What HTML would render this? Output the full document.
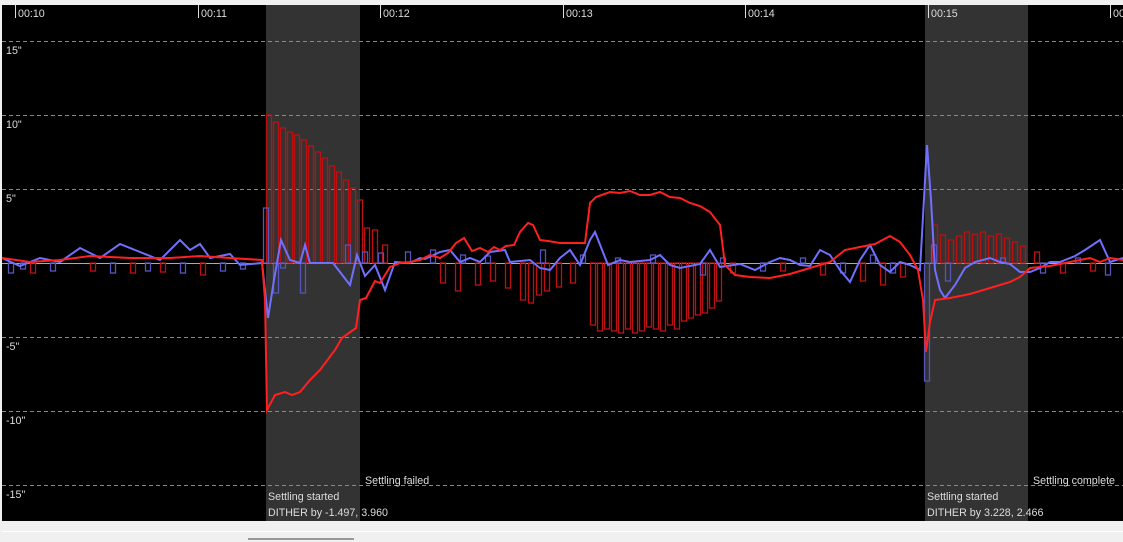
<!DOCTYPE html>
<html><head><style>
body{margin:0;width:1123px;height:542px;background:#f0f0f0;overflow:hidden;font-family:"Liberation Sans",sans-serif}
svg{position:absolute;left:0;top:0}
text{font-family:"Liberation Sans",sans-serif;font-size:10.7px;fill:#ddd}
</style></head><body>
<svg width="1123" height="542">
<rect x="2" y="5" width="1121" height="516" fill="#000"/>
<rect x="266" y="5" width="94" height="516" fill="#333"/>
<rect x="925" y="5" width="103" height="516" fill="#333"/>
<g stroke="#888" stroke-dasharray="4,3" stroke-width="1">
<line x1="2" y1="41.5" x2="1123" y2="41.5"/><line x1="2" y1="115.5" x2="1123" y2="115.5"/>
<line x1="2" y1="189.5" x2="1123" y2="189.5"/><line x1="2" y1="337.5" x2="1123" y2="337.5"/>
<line x1="2" y1="411.5" x2="1123" y2="411.5"/><line x1="2" y1="485.5" x2="1123" y2="485.5"/>
</g>
<line x1="2" y1="263.5" x2="1123" y2="263.5" stroke="#aaa"/>
<g stroke="#ddd"><line x1="15.5" y1="5" x2="15.5" y2="18"/><line x1="198.5" y1="5" x2="198.5" y2="18"/><line x1="380.5" y1="5" x2="380.5" y2="18"/><line x1="563.5" y1="5" x2="563.5" y2="18"/><line x1="745.5" y1="5" x2="745.5" y2="18"/><line x1="928.5" y1="5" x2="928.5" y2="18"/><line x1="1110.5" y1="5" x2="1110.5" y2="18"/></g>
<text x="18" y="17">00:10</text><text x="201" y="17">00:11</text><text x="383" y="17">00:12</text><text x="566" y="17">00:13</text><text x="748" y="17">00:14</text><text x="931" y="17">00:15</text><text x="1113" y="17">00:16</text>
<text x="6" y="54">15"</text><text x="6" y="128">10"</text><text x="6" y="202">5"</text><text x="6" y="350">-5"</text><text x="6" y="424">-10"</text><text x="6" y="498">-15"</text>
<g fill="none" stroke="#b11" stroke-width="1.3">
<rect x="266.5" y="115" width="5" height="148"/><rect x="273.5" y="122" width="5" height="141"/><rect x="280.5" y="128" width="5" height="135"/><rect x="287.5" y="132" width="5" height="131"/><rect x="294.5" y="135" width="5" height="128"/><rect x="301.5" y="140" width="5" height="123"/><rect x="308.5" y="146" width="5" height="117"/><rect x="315.5" y="152" width="5" height="111"/><rect x="322.5" y="158" width="5" height="105"/><rect x="329.5" y="166" width="5" height="97"/><rect x="336.5" y="172" width="5" height="91"/><rect x="343.5" y="180" width="5" height="83"/><rect x="350.5" y="188" width="5" height="75"/><rect x="357.5" y="200" width="5" height="63"/>
<rect x="364.5" y="228" width="5" height="35"/><rect x="372.5" y="230" width="5" height="33"/><rect x="382.5" y="245" width="5" height="18"/>
<rect x="30.5" y="263" width="5" height="10"/><rect x="90.5" y="263" width="5" height="8"/><rect x="130.5" y="263" width="5" height="10"/><rect x="160.5" y="263" width="5" height="9"/><rect x="200.5" y="263" width="5" height="12"/>
<rect x="440.5" y="263" width="5" height="20"/><rect x="455.5" y="263" width="5" height="28"/><rect x="475.5" y="263" width="5" height="22"/><rect x="490.5" y="263" width="5" height="18"/><rect x="505.5" y="263" width="5" height="25"/>
<rect x="520.5" y="263" width="5" height="37"/><rect x="528.5" y="263" width="5" height="40"/><rect x="536.5" y="263" width="5" height="32"/><rect x="544.5" y="263" width="5" height="28"/><rect x="556.5" y="263" width="5" height="24"/><rect x="570.5" y="263" width="5" height="20"/>
<rect x="590.5" y="263" width="5" height="62"/><rect x="597.5" y="263" width="5" height="68"/><rect x="604.5" y="263" width="5" height="66"/><rect x="611.5" y="263" width="5" height="68"/><rect x="618.5" y="263" width="5" height="70"/><rect x="625.5" y="263" width="5" height="66"/><rect x="632.5" y="263" width="5" height="70"/><rect x="639.5" y="263" width="5" height="68"/><rect x="646.5" y="263" width="5" height="64"/><rect x="653.5" y="263" width="5" height="66"/><rect x="660.5" y="263" width="5" height="68"/><rect x="667.5" y="263" width="5" height="62"/><rect x="674.5" y="263" width="5" height="66"/><rect x="681.5" y="263" width="5" height="58"/><rect x="688.5" y="263" width="5" height="55"/><rect x="695.5" y="263" width="5" height="52"/><rect x="702.5" y="263" width="5" height="50"/><rect x="709.5" y="263" width="5" height="45"/><rect x="716.5" y="263" width="5" height="38"/>
<rect x="730.5" y="263" width="5" height="10"/><rect x="780.5" y="263" width="5" height="8"/><rect x="820.5" y="263" width="5" height="12"/><rect x="860.5" y="263" width="5" height="18"/><rect x="880.5" y="263" width="5" height="22"/><rect x="900.5" y="263" width="5" height="14"/>
<rect x="932.5" y="225" width="5" height="38"/><rect x="940.5" y="235" width="5" height="28"/><rect x="948.5" y="240" width="5" height="23"/><rect x="956.5" y="236" width="5" height="27"/><rect x="964.5" y="232" width="5" height="31"/><rect x="972.5" y="234" width="5" height="29"/><rect x="980.5" y="232" width="5" height="31"/><rect x="988.5" y="236" width="5" height="27"/><rect x="996.5" y="234" width="5" height="29"/><rect x="1004.5" y="238" width="5" height="25"/><rect x="1012.5" y="242" width="5" height="21"/><rect x="1020.5" y="246" width="5" height="17"/><rect x="1034.5" y="252" width="5" height="11"/><rect x="1060.5" y="263" width="5" height="10"/><rect x="1090.5" y="263" width="5" height="8"/>
</g>
<g fill="none" stroke="#55b" stroke-width="1.3">
<rect x="263.5" y="208" width="5" height="55"/><rect x="273.5" y="263" width="5" height="30"/><rect x="280.5" y="263" width="5" height="5"/><rect x="300.5" y="263" width="5" height="30"/><rect x="345.5" y="245" width="5" height="18"/><rect x="362.5" y="252" width="5" height="11"/><rect x="378.5" y="253" width="5" height="10"/>
<rect x="8.5" y="263" width="5" height="10"/><rect x="20.5" y="263" width="5" height="6"/><rect x="50.5" y="263" width="5" height="8"/><rect x="110.5" y="263" width="5" height="10"/><rect x="145.5" y="263" width="5" height="8"/><rect x="180.5" y="263" width="5" height="10"/><rect x="220.5" y="263" width="5" height="8"/><rect x="240.5" y="263" width="5" height="6"/>
<rect x="405.5" y="252" width="5" height="11"/><rect x="430.5" y="250" width="5" height="13"/><rect x="460.5" y="255" width="5" height="8"/><rect x="485.5" y="256" width="5" height="7"/><rect x="540.5" y="250" width="5" height="13"/><rect x="580.5" y="255" width="5" height="8"/><rect x="615.5" y="258" width="5" height="5"/><rect x="650.5" y="255" width="5" height="8"/><rect x="700.5" y="263" width="5" height="12"/><rect x="720.5" y="258" width="5" height="5"/><rect x="760.5" y="263" width="5" height="8"/><rect x="800.5" y="258" width="5" height="5"/><rect x="840.5" y="263" width="5" height="10"/><rect x="870.5" y="255" width="5" height="8"/><rect x="890.5" y="263" width="5" height="10"/>
<rect x="924.5" y="263" width="5" height="118"/><rect x="931.5" y="245" width="5" height="18"/><rect x="945.5" y="263" width="5" height="18"/><rect x="1000.5" y="258" width="5" height="5"/><rect x="1040.5" y="263" width="5" height="10"/><rect x="1075.5" y="258" width="5" height="5"/><rect x="1105.5" y="263" width="5" height="12"/>
</g>
<polyline fill="none" stroke="#7070ff" stroke-width="2" points="2,258 20,266 40,258 60,262 80,248 100,258 120,244 140,252 160,260 170,250 180,240 190,250 200,244 210,258 230,254 240,265 262,263 268,318 274,280 281,240 290,260 300,263 305,245 310,263 320,263 333,263 350,285 357,255 365,276 375,265 385,290 395,262 410,263 420,258 425,259 440,252 450,250 460,262 470,258 480,262 490,252 505,250 510,262 530,260 540,268 550,270 560,258 570,250 580,265 590,240 595,232 608,265 620,260 630,262 650,260 660,255 670,265 680,268 700,264 710,250 720,267 740,264 755,270 770,262 780,258 790,260 800,265 810,266 820,250 830,255 840,270 850,282 860,260 870,245 880,265 890,272 900,262 910,265 920,270 927,145 931,200 935,270 940,290 945,298 955,285 965,268 975,262 990,258 1000,262 1010,264 1020,272 1030,272 1040,268 1050,262 1060,262 1075,256 1085,250 1100,240 1110,262 1123,258"/>
<polyline fill="none" stroke="#ff2020" stroke-width="2" points="2,258 30,262 60,260 90,256 130,258 170,258 200,256 230,258 262,260 265,300 267,410 275,395 285,392 292,395 300,392 310,380 320,370 335,350 342,338 356,328 360,300 366,298 375,281 380,283 390,267 400,263 410,262 420,260 430,255 440,258 448,253 456,243 464,238 472,251 480,248 488,252 494,247 500,250 506,246 514,245 520,232 528,223 533,225 540,240 548,241 560,243 576,243 585,243 590,203 596,197 610,192 620,193 630,191 640,195 650,195 660,192 670,197 680,198 690,203 700,206 710,212 720,225 725,265 735,275 750,277 770,278 790,274 810,268 830,262 845,250 860,247 875,244 890,236 900,242 910,255 918,270 923,300 926,352 930,322 935,300 950,298 970,294 990,288 1010,282 1020,277 1030,268 1050,266 1070,262 1090,258 1100,262 1110,258 1123,260"/>
<text x="365" y="484">Settling failed</text><text x="268" y="500">Settling started</text><text x="268" y="516">DITHER by -1.497, 3.960</text>
<text x="1033" y="484">Settling complete</text><text x="927" y="500">Settling started</text><text x="927" y="516">DITHER by 3.228, 2.466</text>
<line x1="2" y1="531.5" x2="1123" y2="531.5" stroke="#fff"/>
<rect x="248" y="538" width="106" height="2" fill="#999"/>
</svg>
</body></html>
